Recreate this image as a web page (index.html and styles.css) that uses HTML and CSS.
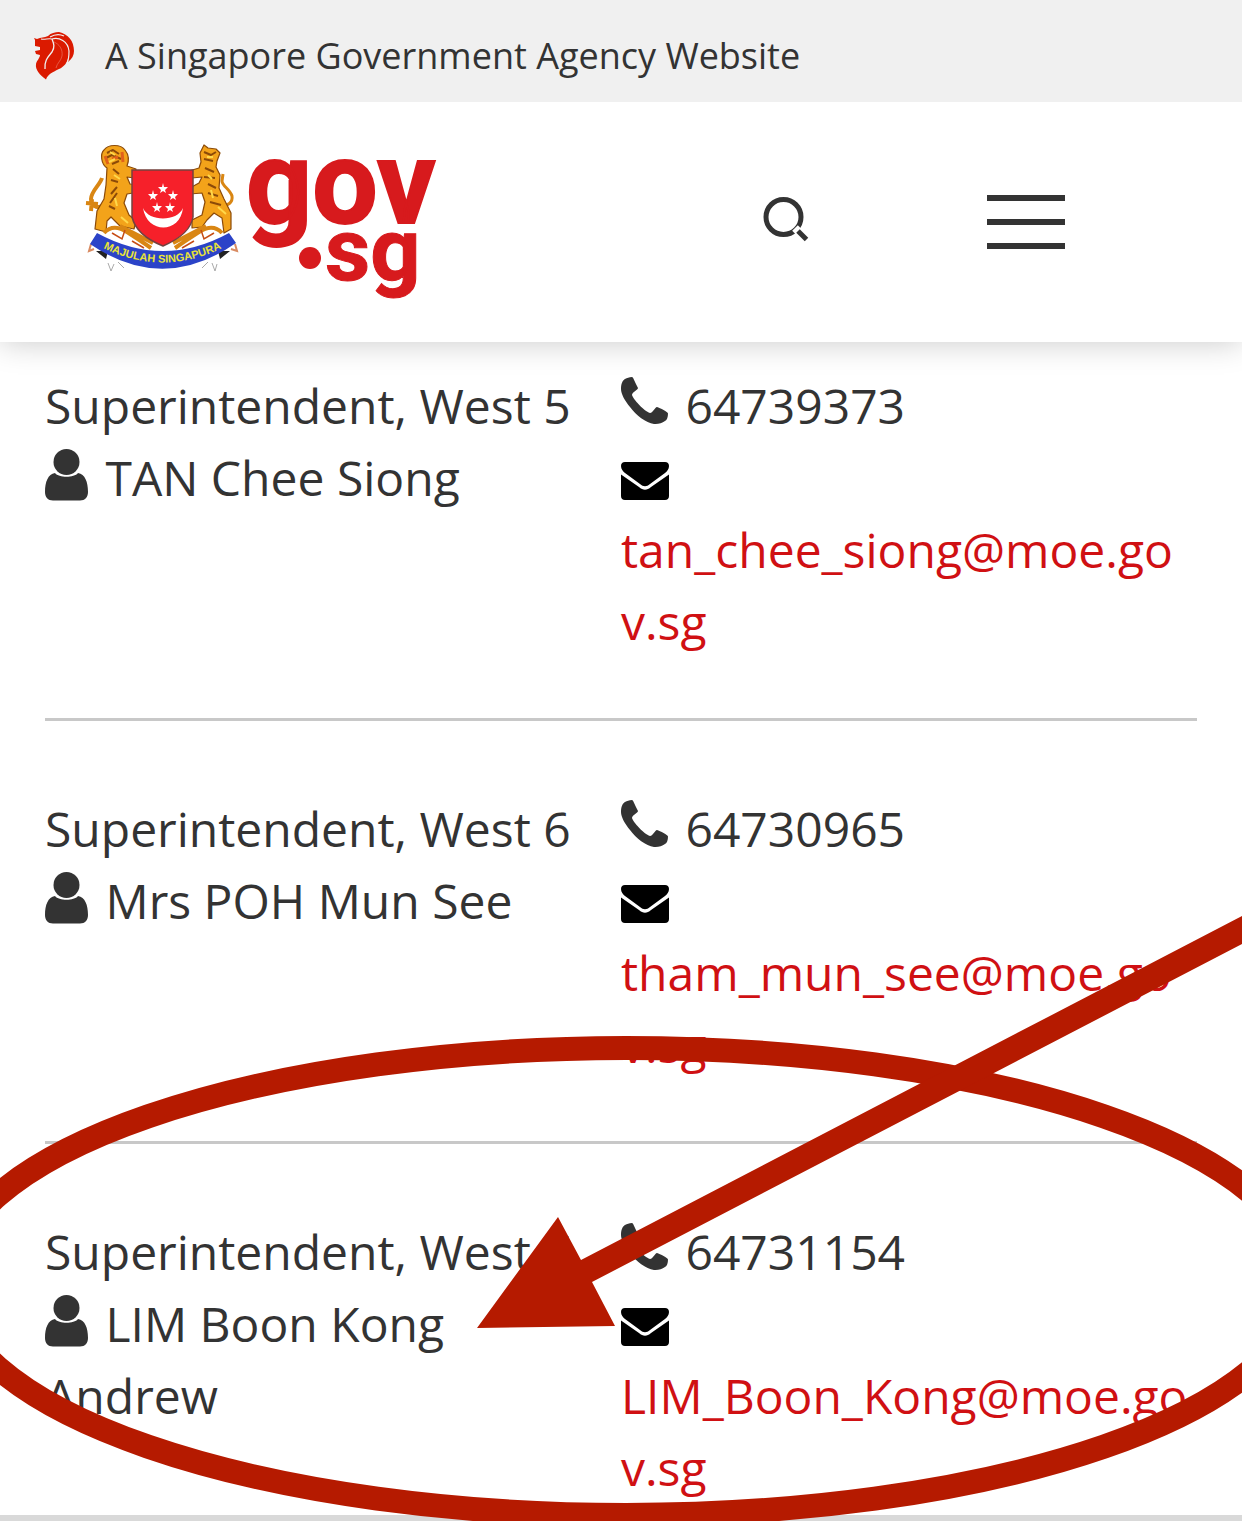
FILE: index.html
```
<!DOCTYPE html>
<html lang="en">
<head>
  <meta charset="UTF-8">
  <meta name="viewport" content="width=device-width, initial-scale=1.0">
  <link rel="stylesheet" href="styles.css">
  <title>Directory</title>
</head>
<body>

<!-- Icons used more than once -->
<svg class="sprite" aria-hidden="true">
  <symbol id="icon-user" viewBox="0 0 44 52">
    <circle cx="21.500" cy="13" r="13"/>
    <path d="M10 24 C14 29 29 29 33 24 C40 25 43 33 43 43 C43 48 40 51.500 35 51.500 H8 C3 51.500 0 48 0 43 C0 33 3 25 10 24 Z"/>
  </symbol>
  <symbol id="icon-phone" viewBox="0 0 48 48">
    <path d="M0 12 C0 6 2 3 4 2 C6 1 8 0 11 0 C12 0 13 3 17 11 C17 13 11 15 11 18 C12 22 23 34 29 36 C32 36 34 30 36 30 C39 31 47 35 47 36.500 C47 40 46 43 44 44 C41 46 37 47.500 33 47 C25 46 15 38 9 30 C4 24 0 17 0 12 Z"/>
  </symbol>
  <symbol id="icon-mail" viewBox="0 0 48 38">
    <path d="M4 0 H44 C46.500 0 48 1.500 48 4 C48 7 46 9.500 44 11 L29 22 C25.500 25 22.500 25 19 22 L4 11 C2 9.500 0 7 0 4 C0 1.500 1.500 0 4 0 Z"/>
    <path d="M0 12.500 L18 25 C22 28.500 26 28.500 30 25 L48 12.500 V34 C48 36.500 46.500 38 44 38 H4 C1.500 38 0 36.500 0 34 Z"/>
  </symbol>
</svg>

<div class="page">
  <div class="masthead">
    <svg class="masthead-lion" viewBox="0 0 42 50" aria-hidden="true">
      <path fill="#db1a00" d="M1 9 L0 7 L3 8 C7 6 10 7 14 5 C17 2 21 1 25 1 C34 3 40 10 40 20 C40 24 38 28 34 31 C34 29 35 27 35 25 C33 32 30 36 25 38 C19 41 14 43 12 48.500 C6 44 1 39 2 33 C3 29 6 27 6 24 L2 23 L1 20 L6 19 V16 L1 15 Z"/>
      <path fill="none" stroke="#f0f0f0" stroke-width="1.200" d="M7 8 C11 9 14 7 18 8 C25 6 34 10 35 20 C35 24 35 28 33 32 M16 6 C21 3 26 3 30 5"/>
      <path fill="none" stroke="#f0f0f0" stroke-width="1.300" d="M18 8 C20 13 21 16 18 21 C15 25 10 29 11 38"/>
      <path fill="none" stroke="#e8705f" stroke-width="0.700" d="M20 11 C25 13 29 18 28 25 C27 30 23 32 22 37"/>
    </svg>
    <span>A Singapore Government Agency Website</span>
  </div>

  <header class="header">
    <a class="logo" href="#" aria-label="gov.sg">
      <svg class="logo-image" viewBox="84 142 352 158">
        <defs>
          <path id="motto" d="M99 245 Q163 278 226 245"/>
        </defs>
        <g stroke="#8b4a08" stroke-width="1.200" stroke-linejoin="round">
          <path fill="none" stroke="#d98613" stroke-width="4" d="M108 203 C99 208 91 207 91 198 C91 190 100 184 102 177 M86 202 L98 203 M92 198 L91 210"/>
          <path fill="#f3a31a" d="M107 167 C101 163 100 153 104 149 C108 143 121 143 125 149 C129 154 129 160 127 165 L136 168 L134 177 L127 176 L130 183 L139 184 L139 191 L127 193 L124 202 L129 214 L136 220 L134 228 L120 225 L111 216 L107 220 L106 231 L95 228 L97 210 L104 198 L106 184 Z"/>
          <path fill="none" stroke-width="2" d="M107 152 L113 149 L119 153 M106 157 L112 154 L121 158 M112 163 L119 160 M113 168 L119 173 M111 179 L118 181 M117 186 L111 193 M117 192 L110 202 M109 205 L115 208"/>
          <path fill="none" stroke="#e0601a" stroke-width="3" d="M105 155 L108 163 M122 151 L123 161 M112 158 L118 156"/>
          <path fill="none" stroke="#ffd84a" stroke-width="2" d="M110 151 L115 154 M109 161 L115 158 M114 174 L120 178 M115 197 L117 205 M121 216 L128 222"/>
        </g>
        <g stroke="#8b4a08" stroke-width="1.200" stroke-linejoin="round">
          <path fill="none" stroke="#d98613" stroke-width="3" d="M220 204 C228 206 233 201 232 195 C230 188 222 185 222 180 L223 173"/>
          <path fill="#f3a31a" d="M204 144 L208 147 L216 148 L220 152 L217 160 L216 166 L220 174 L219 187 L224 198 L231 212 L231 228 L224 232 L222 217 L214 212 L207 219 L202 226 L192 227 L192 219 L202 214 L205 201 L202 192 L190 193 L188 188 L199 182 L202 176 L192 177 L189 170 L199 167 L201 161 L200 152 Z"/>
          <path fill="none" stroke-width="2" d="M204 151 L211 154 L216 151 M204 158 L213 160 M205 167 L214 171 M204 176 L215 177 M208 183 L216 187 M208 192 L218 195 M210 201 L221 204"/>
          <path fill="none" stroke="#ffd84a" stroke-width="2" d="M207 156 L213 156 M208 174 L212 178 M211 189 L213 197 M218 206 L226 213"/>
        </g>
        <!-- scrollwork under the shield -->
        <path fill="none" stroke="#d98613" stroke-width="4" d="M104 232 Q113 222 127 231 T151 247 M120 225 L153 242 M222 232 Q213 222 199 231 T175 247 M206 225 L173 242"/>
        <path fill="none" stroke="#c64d15" stroke-width="1.500" d="M112 232 L122 238 L125 229 M132 240 L144 247 M214 232 L204 238 L201 229 M194 240 L182 247"/>
        <path fill="#f6202a" stroke="#74413e" stroke-width="1.500" d="M132 169 H193 V216 C191 229 177 239 163 245 C148 239 135 229 132 216 Z"/>
        <path fill="#fff" d="M143 207 C149 221 177 221 183 207 C180 233 147 233 143 207 Z"/>
        <g fill="#fff">
          <path id="star" d="M163 182 L164 186 H168 L165 189 L166 192 L163 190 L160 192 L161 189 L158 186 H162 Z"/>
          <use href="#star" x="-10" y="7"/>
          <use href="#star" x="10" y="7"/>
          <use href="#star" x="-6" y="19"/>
          <use href="#star" x="7" y="19"/>
        </g>
        <path fill="#222" d="M96 250 L108 250 L106 258 Z M230 250 L218 250 L220 258 Z"/>
        <path fill="none" stroke="#d98b62" stroke-width="2" d="M91 243 L89 250 L94 248 M235 243 L237 250 L231 248"/>
        <path fill="none" stroke="#aaa" d="M108 262 L111 270 L114 263 M118 261 L124 267 M212 262 L215 270 L217 263 M208 261 L202 267"/>
        <path fill="#2b43c8" d="M97 232 Q163 268 229 232 L236 242 Q163 293 90 243 Z"/>
        <text class="motto-text"><textPath href="#motto" startOffset="50%" text-anchor="middle">MAJULAH SINGAPURA</textPath></text>
        <text class="logo-gov" x="246" y="222">gov</text>
        <circle fill="#d71a1d" cx="310" cy="257" r="11"/>
        <text class="logo-sg" x="325" y="279">sg</text>
      </svg>
    </a>
    <div class="header-buttons">
      <button class="icon-button" type="button" aria-label="Search">
        <svg width="46" height="50" viewBox="0 0 46 50" fill="none" stroke="#333" stroke-width="5">
          <circle cx="20.500" cy="20" r="17.500"/>
          <path stroke="#fff" stroke-width="8" d="M32 31 L36 35"/>
          <path d="M35 34 L43.500 42.500"/>
        </svg>
      </button>
      <button class="icon-button menu-button" type="button" aria-label="Menu">
        <span></span>
        <span></span>
        <span></span>
      </button>
    </div>
  </header>

  <main class="directory">
    <div class="entry">
      <div class="person">
        <div>Superintendent, West 5</div>
        <div><svg class="icon icon-user"><use href="#icon-user"/></svg> TAN Chee Siong</div>
      </div>
      <div class="contact">
        <div><svg class="icon icon-phone"><use href="#icon-phone"/></svg> 64739373</div>
        <div><svg class="icon icon-mail"><use href="#icon-mail"/></svg> <a href="mailto:tan_chee_siong@moe.gov.sg">tan_chee_siong@moe.gov.sg</a></div>
      </div>
    </div>
    <div class="entry">
      <div class="person">
        <div>Superintendent, West 6</div>
        <div><svg class="icon icon-user"><use href="#icon-user"/></svg> Mrs POH Mun See</div>
      </div>
      <div class="contact">
        <div><svg class="icon icon-phone"><use href="#icon-phone"/></svg> 64730965</div>
        <div><svg class="icon icon-mail"><use href="#icon-mail"/></svg> <a href="mailto:tham_mun_see@moe.gov.sg">tham_mun_see@moe.gov.sg</a></div>
      </div>
    </div>
    <div class="entry">
      <div class="person">
        <div>Superintendent, West 7</div>
        <div><svg class="icon icon-user"><use href="#icon-user"/></svg> LIM Boon Kong Andrew</div>
      </div>
      <div class="contact">
        <div><svg class="icon icon-phone"><use href="#icon-phone"/></svg> 64731154</div>
        <div><svg class="icon icon-mail"><use href="#icon-mail"/></svg> <a href="mailto:LIM_Boon_Kong@moe.gov.sg">LIM_Boon_Kong@moe.gov.sg</a></div>
      </div>
    </div>
  </main>
  <div class="bottom-bar"></div>

  <!-- Circle and arrow drawn over the last entry -->
  <svg class="markup" viewBox="0 0 1242 1521" aria-hidden="true">
    <ellipse cx="626" cy="1281.500" rx="676" ry="233.500" fill="none" stroke="#b51a00" stroke-width="24"/>
    <path fill="#b51a00" d="M477 1328 L558 1217 L581 1260 L1242 916 V944 L592 1282 L615 1326 Z"/>
  </svg>
</div>

</body>
</html>
```
FILE: styles.css
```
body {
  margin: 0;
  font-family: 'Open Sans', 'Noto Sans', sans-serif;
  font-size: 48px;
  line-height: 72px;
  color: #333;
  background-color: #fff;
}

a {
  color: #d01013;
  text-decoration: none;
}

.sprite {
  display: none;
}

.page {
  position: relative;
  overflow: hidden;
}

/* Government banner */
.masthead {
  position: relative;
  z-index: 2;
  display: flex;
  align-items: center;
  gap: 29px;
  padding: 26px 34px 16px;
  background-color: #f0f0f0;
  font-size: 36px;
  line-height: 60px;
}

.masthead-lion {
  width: 42px;
  height: 50px;
}

/* Header */
.header {
  position: relative;
  z-index: 1;
  display: flex;
  align-items: center;
  justify-content: space-between;
  min-height: 240px;
  padding: 0 177px 0 84px;
  box-sizing: border-box;
  background-color: #fff;
  box-shadow: 0 0 30px rgba(0, 0, 0, 0.22);
}

.logo-image {
  display: block;
  width: 352px;
  height: 158px;
  overflow: visible;
}

.logo-gov,
.logo-sg {
  font-family: Roboto, sans-serif;
  font-weight: 700;
  fill: #d71a1d;
  stroke: #d71a1d;
}

.logo-gov {
  font-size: 116px;
  stroke-width: 2px;
}

.logo-sg {
  font-size: 88px;
  stroke-width: 1px;
}

.motto-text {
  font-family: 'Liberation Sans', Arial, sans-serif;
  font-size: 11px;
  font-weight: 700;
  fill: #e8e337;
}

.header-buttons {
  display: flex;
  align-items: center;
  gap: 178px;
}

.icon-button {
  display: block;
  padding: 0;
  border: none;
  background: none;
  cursor: pointer;
}

.icon-button svg {
  display: block;
}

.menu-button {
  display: flex;
  flex-direction: column;
  gap: 18px;
  width: 78px;
}

.menu-button span {
  height: 6px;
  background-color: #333;
}

/* Staff list */
.directory {
  padding: 28px 45px 11px;
}

.entry {
  display: grid;
  grid-template-columns: 1fr 1fr;
  padding-bottom: 60px;
  margin-bottom: 72px;
  border-bottom: 3px solid #c8c8c8;
}

.entry:last-child {
  padding-bottom: 0;
  margin-bottom: 0;
  border-bottom: none;
}

.person,
.contact {
  min-width: 0;
}

.contact {
  padding-right: 4px;
  overflow-wrap: break-word;
}

.icon {
  margin-right: 4px;
  fill: currentColor;
}

.icon-user {
  width: 44px;
  height: 52px;
  vertical-align: -5px;
}

.icon-phone {
  width: 48px;
  height: 48px;
  vertical-align: -1px;
}

.icon-mail {
  width: 48px;
  height: 38px;
  vertical-align: -4px;
  color: #000;
}

.bottom-bar {
  height: 6px;
  background-color: #d9d9d9;
}

/* Drawn over the list */
.markup {
  position: absolute;
  top: 0;
  left: 0;
  z-index: 3;
  width: 100%;
  height: auto;
  pointer-events: none;
}
```
